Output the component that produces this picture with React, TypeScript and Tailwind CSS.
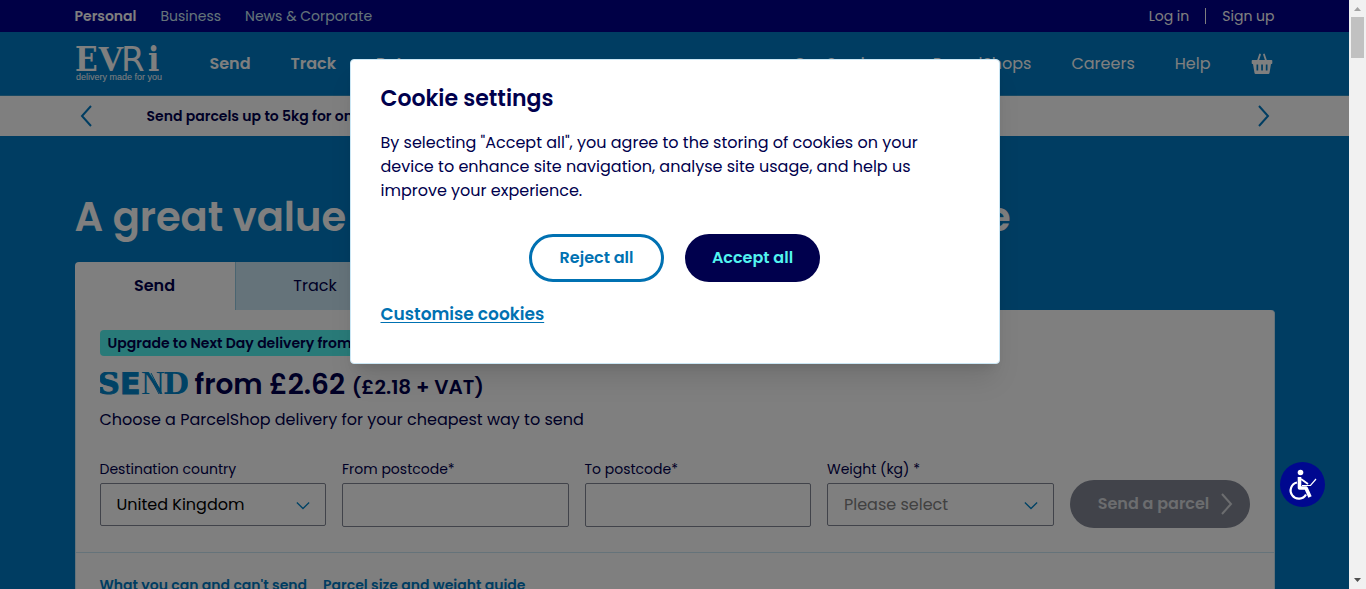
import type { ReactNode } from "react";

function EvriLogo() {
  return (
    <svg viewBox="0 0 88 40" className="h-10 w-[88px] shrink-0" fill="#fff" role="img" aria-label="Evri, delivery made for you">
      <text x="0" y="27" fontFamily="'DejaVu Serif Condensed', 'DejaVu Serif', serif" fontWeight="700" fontSize="33">E</text>
      <text x="23" y="27" fontFamily="'Liberation Serif', serif" fontWeight="700" fontSize="36">V</text>
      <text x="46" y="27" fontFamily="'DejaVu Sans', sans-serif" fontSize="34">R</text>
      <text x="73" y="27" fontFamily="'DejaVu Serif Condensed', 'DejaVu Serif', serif" fontWeight="700" fontSize="33">i</text>
      <text x="1" y="36" fontFamily="'Liberation Sans', sans-serif" fontSize="9">delivery made for you</text>
    </svg>
  );
}

function SendMark() {
  return (
    <svg viewBox="0 0 88 26" className="h-[26px] w-[88px] shrink-0" fill="#0085ca" role="img" aria-label="Send">
      <text x="-2" y="22" fontFamily="'DejaVu Serif', serif" fontWeight="700" fontSize="30" stroke="#0085ca">S</text>
      <text x="20" y="22" fontFamily="'DejaVu Sans', sans-serif" fontWeight="700" fontSize="30" stroke="#0085ca">E</text>
      <text x="41" y="22" fontFamily="'Liberation Serif', serif" fontSize="33">N</text>
      <path d="M48 1 59 22M51 1 62 22" stroke="#0085ca" strokeWidth="1" />
      <text x="63" y="22" fontFamily="'DejaVu Serif', serif" fontWeight="700" fontSize="30">D</text>
    </svg>
  );
}

function Chevron({ dir, className }: { dir: "left" | "right" | "down"; className: string }) {
  const d = { left: "M11 1 2 11l9 10", right: "M1 1l9 10-9 10", down: "M1 1l7 7 7-7" }[dir];
  return (
    <svg viewBox={dir === "down" ? "0 0 16 9" : "0 0 12 22"} className={className} fill="none" stroke="currentColor" strokeWidth={dir === "down" ? 1.5 : 2} aria-hidden="true">
      <path d={d} />
    </svg>
  );
}

function Basket() {
  return (
    <svg viewBox="0 0 22 22" className="h-[22px] w-[22px]" aria-hidden="true">
      <path d="M6.5 9 9 1.5M15.500 9 13 1.500" stroke="#fff" strokeWidth="1.8" fill="none" strokeLinecap="round" />
      <path fill="#fff" fillRule="evenodd" d="M1.500 7h19a.8.8 0 0 1 .8.800v2.400a.8.8 0 0 1-.8.800H20l-1.500 9a1.200 1.200 0 0 1-1.200 1H4.700a1.200 1.200 0 0 1-1.200-1L2 11h-.500a.8.8 0 0 1-.8-.800V7.800a.8.8 0 0 1 .8-.800ZM5.500 11.500h1.700v6H5.500ZM10.200 11.500h1.700v6h-1.700ZM14.800 11.500h1.700v6h-1.700Z" />
    </svg>
  );
}

function Wheelchair() {
  return (
    <svg viewBox="0 0 45 45" className="h-[45px] w-[45px]" fill="none" stroke="#fff" aria-hidden="true">
      <circle cx="20.500" cy="10.500" r="2.800" fill="#fff" stroke="none" />
      <path d="M19.500 15v11h6.500l4 9" strokeWidth="3.600" strokeLinejoin="round" />
      <path d="M21 17l7 5" strokeWidth="1.800" />
      <path d="M22 23.500h8.500l5.500-6.500" strokeWidth="1.200" />
      <path d="M17 20.500a8.200 8.200 0 1 0 9 12" strokeWidth="2.200" />
    </svg>
  );
}

function Field({ id, label, children }: { id: string; label: string; children: ReactNode }) {
  return (
    <div className="flex min-w-0 flex-1 flex-col gap-1 pb-px">
      <label htmlFor={id} className="text-sm leading-5">{label}</label>
      {children}
    </div>
  );
}

function SelectField({ id, label, option, className }: { id: string; label: string; option: string; className: string }) {
  return (
    <Field id={id} label={label}>
      <div className="relative pb-px">
        <select id={id} className={`block h-[43px] w-full appearance-none rounded-xs border border-[#828795] bg-white pl-4 text-base ${className}`}>
          <option>{option}</option>
        </select>
        <Chevron dir="down" className="pointer-events-none absolute top-[18px] right-4 h-[9px] w-[14px] text-[#0085ca]" />
      </div>
    </Field>
  );
}

function TextField({ id, label }: { id: string; label: string }) {
  return (
    <Field id={id} label={label}>
      <input id={id} type="text" className="h-11 w-full rounded-xs border border-[#828795] bg-white px-4" />
    </Field>
  );
}

function Header() {
  return (
    <header className="text-white">
      <div className="bg-[#00008c]">
        <div className="mx-auto flex h-8 max-w-[1200px] items-center justify-between text-sm">
          <nav className="flex gap-6" aria-label="Sites">
            <a href="#personal" className="font-semibold">Personal</a>
            <a href="#business" className="text-[#cae6f2]">Business</a>
            <a href="#news" className="text-[#cae6f2]">News &amp; Corporate</a>
          </nav>
          <nav className="flex items-center gap-4" aria-label="Account">
            <a href="#login">Log in</a>
            <span className="h-4 w-px bg-white" />
            <a href="#signup">Sign up</a>
          </nav>
        </div>
      </div>
      <div className="border-b border-[#3192c6] bg-[#007bc4]">
        <div className="mx-auto flex h-[63px] max-w-[1200px] items-center pr-0.5">
          <EvriLogo />
          <nav className="ml-[47px] flex flex-1 gap-10 font-semibold" aria-label="Main">
            <a href="#send">Send</a>
            <a href="#track">Track</a>
            <a href="#returns">Return</a>
          </nav>
          <nav className="flex items-center gap-10" aria-label="Services">
            <a href="#services">Our Services</a>
            <a href="#parcelshops">ParcelShops</a>
            <a href="#careers">Careers</a>
            <a href="#help">Help</a>
            <a href="#basket" aria-label="Basket"><Basket /></a>
          </nav>
        </div>
      </div>
    </header>
  );
}

function Banner() {
  return (
    <div className="bg-white">
      <div className="mx-auto flex h-10 max-w-[1200px] items-center px-[5px]">
        <button type="button" aria-label="Previous" className="text-[#007bc4]"><Chevron dir="left" className="h-[22px] w-3" /></button>
        <p className="ml-[55px] flex-1 text-sm font-semibold">Send parcels up to 5kg for only £2.62 from a ParcelShop</p>
        <button type="button" aria-label="Next" className="text-[#007bc4]"><Chevron dir="right" className="h-[22px] w-3" /></button>
      </div>
    </div>
  );
}

function Quote() {
  return (
    <main className="mx-auto max-w-[1200px]">
      <h1 className="pt-[53px] pb-[17px] text-[40px] leading-14 font-semibold text-white">A great value way to send your packets online</h1>
      <div className="flex h-12">
        <button type="button" className="w-40 rounded-tl bg-white font-semibold">Send</button>
        <button type="button" className="w-40 border-l border-[#95cbe3] bg-[#cae6f4]">Track</button>
        <button type="button" className="w-40 rounded-tr border-l border-[#95cbe3] bg-[#cae6f4]">Return</button>
      </div>
      <section className="rounded-tr border-x border-[#cae6f4] bg-white pt-5">
        <div className="px-6">
          <p className="w-fit rounded bg-[#52f4f0] px-2 py-[3px] text-sm leading-5 font-semibold">Upgrade to Next Day delivery from only £3.49</p>
          <div className="mt-[9px] flex h-10 items-center gap-[7px]">
            <SendMark />
            <p className="text-[28px] font-semibold">from £2.62 <span className="text-xl">(£2.18 + VAT)</span></p>
          </div>
          <p className="mt-[3px] leading-6">Choose a ParcelShop delivery for your cheapest way to send</p>
          <form className="mt-[27px] flex items-end gap-4">
            <SelectField id="country" label="Destination country" option="United Kingdom" className="text-black" />
            <TextField id="from" label="From postcode*" />
            <TextField id="to" label="To postcode*" />
            <SelectField id="weight" label="Weight (kg) *" option="Please select" className="text-[#828282]" />
            <button type="button" className="flex h-12 w-[180px] shrink-0 items-center justify-center gap-3 rounded-full bg-[#828795] pl-3 font-semibold text-[#d8dade]">
              Send a parcel
              <Chevron dir="right" className="h-[22px] w-3" />
            </button>
          </form>
        </div>
        <div className="mt-6 flex gap-4 border-t border-[#cae6f4] px-6 pt-[22px] pb-6 text-sm font-semibold text-[#007bc4]">
          <a href="#restrictions">What you can and can't send</a>
          <a href="#sizes">Parcel size and weight guide</a>
        </div>
      </section>
    </main>
  );
}

function CookieDialog() {
  return (
    <section role="dialog" aria-labelledby="cookie-title" className="w-[650px] rounded border border-[#cae6f4] bg-white px-[30px] pt-[23px] pb-[37px] shadow-xl">
      <h2 id="cookie-title" className="text-[22px] leading-8 font-semibold">Cookie settings</h2>
      <p className="mt-4 leading-6">
        By selecting "Accept all", you agree to the storing of cookies on your device to enhance site navigation, analyse site usage, and help us improve your experience.
      </p>
      <div className="mt-[31px] flex justify-center gap-[21px] font-semibold">
        <button type="button" className="h-12 w-[135px] rounded-full border-3 border-[#0071b2] text-[#0071b2]">Reject all</button>
        <button type="button" className="h-12 w-[135px] rounded-full bg-[#00004d] text-[#52f4f0]">Accept all</button>
      </div>
      <a href="#customise" className="mt-5 block w-fit text-[17px] leading-6 font-semibold text-[#0071b2] underline underline-offset-2">Customise cookies</a>
    </section>
  );
}

function Scrollbar() {
  return (
    <div className="flex w-[17px] shrink-0 flex-col items-center bg-[#f1f1f1]" aria-hidden="true">
      <svg viewBox="0 0 17 17" className="size-[17px]" fill="#a3a3a3"><path d="M5 11 8.500 7 12 11Z" /></svg>
      <div className="h-[41px] w-[13px] bg-[#c1c1c1]" />
      <svg viewBox="0 0 17 17" className="mt-auto size-[17px]" fill="#505050"><path d="M5 6 8.500 10 12 6Z" /></svg>
    </div>
  );
}

export default function App() {
  return (
    <div className="flex h-screen overflow-hidden font-[Poppins,Inter,sans-serif] text-base text-[#00004d]">
      <div className="relative min-w-0 flex-1 overflow-hidden bg-[#007bc4]">
        <Header />
        <Banner />
        <Quote />
        <div className="absolute inset-0 flex items-start justify-center bg-black/50 pt-[59px]">
          <CookieDialog />
        </div>
        <button type="button" aria-label="Accessibility options" className="absolute right-6 bottom-[82px] rounded-full bg-[#00088f]">
          <Wheelchair />
        </button>
      </div>
      <Scrollbar />
    </div>
  );
}
